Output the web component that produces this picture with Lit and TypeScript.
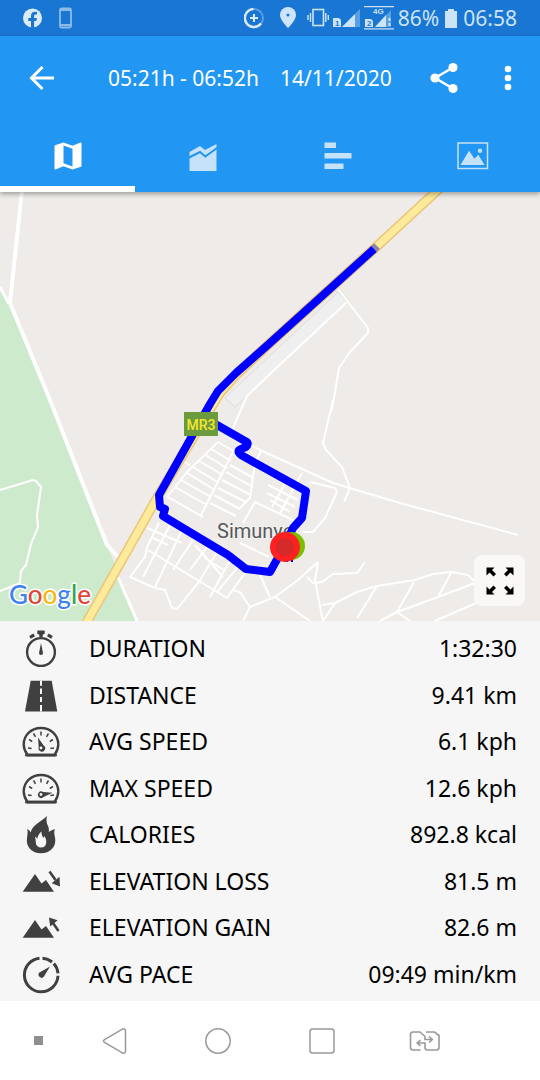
import { LitElement, html, svg, css, TemplateResult } from "lit";
import { customElement, state } from "lit/decorators.js";

const icon = (w: number, h: number, body: TemplateResult) =>
  html`<svg width=${w} height=${h} viewBox="0 0 ${w} ${h}" aria-hidden="true">${body}</svg>`;

/* ---------- stat icons, 40 x 40 ---------- */
const gauge = (needle: TemplateResult) => svg`
  <path d="M6.500 32h27c2.500-3.500 3.800-7 3.800-10.500C37.300 12 29.500 5 20 5S2.700 12 2.700 21.500c0 3.500 1.300 7 3.800 10.500z"
    fill="none" stroke="#404040" stroke-width="2.400" stroke-linejoin="round"/>
  <path d="M5.500 32.200h29" stroke="#404040" stroke-width="2.800" stroke-linecap="round"/>
  <path d="M20 8.500v4M12.500 10.500l2 3.300M27.500 10.500l-2 3.300M8 16.500l3.200 2M32 16.500l-3.200 2M7 25l3.600.6M33 25l-3.600.6"
    stroke="#404040" stroke-width="1.500"/>
  ${needle}`;

const mountains = svg`<path d="M1.700 28.700L14 11l6.500 9.500 4.500-3.500 8 11.700z" fill="#404040"/>`;

const statIcons: Record<string, TemplateResult> = {
  duration: svg`
    <circle cx="20" cy="22" r="13.900" fill="none" stroke="#404040" stroke-width="2.400"/>
    <path d="M16.300.5h7.400v3.300l-2 1v2.200h-3.400V4.800l-2-1z" fill="#404040"/>
    <path d="M9 7.300l4.200-2.500M31 7.300l-4.200-2.500" stroke="#404040" stroke-width="3.200"/>
    <path d="M20 13l2 10a2 2 0 0 1-4 0z" fill="#404040"/>`,
  distance: svg`
    <path d="M9.700 3.800H30.700L36.300 34.400H4z" fill="#404040"/>
    <path d="M20 3.800v5M20 11.500v5.500M20 20v5M20 28v6.400" stroke="#f6f6f6" stroke-width="2"/>`,
  avg: gauge(svg`<path d="M17 14.500l5.600 8a3.300 3.300 0 1 1-4.900 2z" fill="#404040"/>
    <circle cx="20" cy="25" r="1.400" fill="#f6f6f6"/>`),
  max: gauge(svg`<path d="M31.500 22.800l-9 4.300a3.300 3.300 0 1 1-.5-5.200z" fill="#404040"/>
    <circle cx="20" cy="24.500" r="1.400" fill="#f6f6f6"/>`),
  calories: svg`
    <path d="M26 0c-1 4-.5 7 .8 9.500 1 2 1.300 4 1 6.500 1.500-.8 3-2 6.200-2.700-1.500 2.500-.5 5.500.2 9.200C35.300 31 29 37.300 20 37.300S4.700 31 6 22c.4-3 1-5.500.3-9 1.700.7 2.700 2 3.300 3.500 1-4 3.500-6.500 7-9.200C20 4.800 23 3 26 0z" fill="#404040"/>
    <path d="M20.500 15.500c-.3 3 1 4.500 1.800 6.500.6-.5.8-1.200.8-2.200 2 2.700 2.400 5 2.100 7.200-.4 3-2.400 4.500-5.200 4.500s-5-1.700-5.200-4.700c-.1-2.300-.2-4.300-.8-6 1.200.4 1.900 1.200 2.300 2.200.3-3 1.800-5.500 4.200-7.500z" fill="#f6f6f6"/>`,
  loss: svg`${mountains}
    <path d="M28.500 8.500l6 8.500" stroke="#404040" stroke-width="2.600"/>
    <path d="M39 23.500l-8.300-3.300 7.800-6.400z" fill="#404040"/>`,
  gain: svg`${mountains}
    <path d="M37.500 22l-5.500-8" stroke="#404040" stroke-width="2.600"/>
    <path d="M28 8.500l8.600 2.800-7.400 6.300z" fill="#404040"/>`,
  pace: svg`
    <g fill="none" stroke="#404040" stroke-width="3">
      <path d="M18.500 2.300A16.800 16.800 0 1 0 37 19.800"/>
      <path d="M21.500 2.200A16.800 16.800 0 0 1 31 6"/>
      <path d="M32.800 7.500A16.800 16.800 0 0 1 37 17.300"/>
    </g>
    <path d="M29 10.500l-6.200 10.300a3 3 0 1 1-4.300-4.300z" fill="#404040"/>`,
};

const stats = [
  ["duration", "DURATION", "1:32:30"],
  ["distance", "DISTANCE", "9.41 km"],
  ["avg", "AVG SPEED", "6.1 kph"],
  ["max", "MAX SPEED", "12.6 kph"],
  ["calories", "CALORIES", "892.8 kcal"],
  ["loss", "ELEVATION LOSS", "81.5 m"],
  ["gain", "ELEVATION GAIN", "82.6 m"],
  ["pace", "AVG PACE", "09:49 min/km"],
];

/* ---------- tab icons, 36 x 36 ---------- */
const tabs: [string, TemplateResult][] = [
  ["Map", svg`<g transform="scale(1.5)"><path fill="currentColor" d="M20.500 3l-.16.03L15 5.100 9 3 3.360 4.900c-.21.07-.36.25-.36.48V20.500c0 .28.22.5.5.5l.16-.03L9 18.900l6 2.100 5.640-1.900c.21-.07.36-.25.36-.48V3.500c0-.28-.22-.5-.5-.5zM15 19l-6-2.110V5l6 2.110V19z"/></g>`],
  ["Charts", svg`<path fill="currentColor" d="M4.500 14L15 8l5 4 11.500-6v27h-27z"/>
    <path fill="none" stroke="#2196f3" stroke-width="2" d="M4 19.500l11-5.500 5.300 4.500L32 10"/>`],
  ["Laps", svg`<path fill="currentColor" d="M4.500 4.500H16V10H4.500zM4.500 15h27v5.500h-27zM4.500 25.500h19V31h-19z"/>`],
  ["Photos", svg`<rect x="3" y="5" width="29.500" height="25.500" fill="none" stroke="currentColor" stroke-width="1.500"/>
    <path fill="currentColor" d="M5.500 27L14 12.700l5.500 8 3.800-4L29.500 27z"/><circle cx="25" cy="12.700" r="2.200" fill="currentColor"/>`],
];

/* ---------- map geometry ---------- */
const highway = "M440 188L375 248 270 343 237 374 220 393 157 498 84 627";

const route =
  "M374 249L270 343 236 373 218 391 210 404 159 495 160 507 165 509 163 516 228 555 246 569 270 572 284 547 293 528 302 518 306 491 241 455Q236 451 241 449L246 447Q250 443 245 441L210 421";

const streets = [
  "M338 289L368 328V333L350 352 339 368 332 410 333 400 323 443 326 450 342 467 350 488 344 502",
  "M347 302L270 374 247 396 232 430",
  "M248 444L260 450 333 483 400 503 518 535",
  "M310 482L335 488 337 492 325 518 313 532 302 532",
  "M318 562L298 580 275 597 250 607 240 592 233 590M250 607L243 621M275 597L310 621M260 575L270 597",
  "M318 562L315 580 323 622M307 577L313 583 322 582 333 574 357 573 365 562",
  "M322 605L335 603 357 592 377 586 415 580 433 574 452 572 468 575 475 582M335 603L323 621M377 586L357 618",
  "M380 621L397 612 438 597 475 583M414 582L397 612 410 621M451 573L438 597M435 621L483 600",
];

const lanes = [
  "M218 442L187 472 167 497M233 452L200 517M255 463L250 498 240 508",
  "M218 442L235 452M211 449L231 461M205 455L227 468M199 461L223 475M193 467L219 483M187 473L215 490M181 480L211 497M175 487L207 505M168 497L203 517",
  "M235 455L255 466M230 465L254 478M226 472L253 487M222 480L251 495M218 488L246 502M214 495L240 509M210 503L236 516",
  "M185 462L190 466M243 523L255 502 293 520M261 451L255 463M302 473L280 513M287 480L272 507M268 485L298 500M267 493L295 507M270 500L290 512",
  "M159 523L147 547 145 557 130 577 155 588 165 590 172 608 177 609 202 578",
  "M148 550L227 598 247 570M182 530L155 587M170 525L143 577M193 540L173 570M207 547L190 570M217 552L200 580M230 560L210 597M238 567L217 592",
  "M147 528L182 543M153 538L168 545M195 545L223 577M205 558L225 571M240 543L269 557",
];

@customElement("activity-map")
class ActivityMap extends LitElement {
  static styles = css`
    :host { display: block; position: relative; overflow: hidden; background: #eeebe8; }
    .canvas { position: absolute; inset: 0; width: 100%; height: 100%; display: block; }
    .place { font: 20px Roboto, "Noto Sans", sans-serif; fill: #54595c; stroke: #f4f2f0; stroke-width: 2px; paint-order: stroke; }
    .shield { font: 500 14px Roboto, "Noto Sans", sans-serif; fill: #f6e72e; text-anchor: middle; }
    .brand { font: 500 26px Lato, sans-serif; stroke: #fff; stroke-width: 3px; paint-order: stroke; stroke-linejoin: round; }
    .b { fill: #4081ec; } .r { fill: #e2453a; } .y { fill: #f5b912; } .g { fill: #34a350; }
    .full {
      position: absolute; right: 15px; bottom: 15px; width: 51px; height: 51px; padding: 0;
      border: 0; border-radius: 8px; background: #f9f8f7; display: grid; place-items: center; cursor: pointer;
    }
  `;

  render() {
    return html`
      <svg class="canvas" viewBox="0 192 540 429" preserveAspectRatio="xMidYMid slice" role="img" aria-label="Route near Simunye">
        <path d="M0 288L9 305 50 400 107 545 137 621H0z" fill="#cdeacd"/>
        <g fill="none" stroke="#fff" stroke-linejoin="round">
          <path d="M0 490L33 480 36 481 41 487 37 515 38 527 31 544 26 565 21 571 20 583 0 591" stroke-width="2"/>
          <path d="M0 287L9 304" stroke-width="3"/>
          <path d="M22 190L10 303 50 400 107 545 118 557" stroke-width="4"/>
          <path d="M118 577L137 621" stroke-width="3"/>
        </g>
        <path d="M338 292L347 302 235 407 225 398z" fill="#f0efef" stroke="#dedcdb"/>
        <g fill="none" stroke="#fff" stroke-linejoin="round" stroke-width="2">${streets.map((d) => svg`<path d=${d}/>`)}</g>
        <g fill="none" stroke="#fff" stroke-linejoin="round" stroke-width="2">${lanes.map((d) => svg`<path d=${d}/>`)}</g>
        <g fill="none" stroke-linejoin="round">
          <path d=${highway} stroke="#ecc676" stroke-width="10"/>
          <path d=${highway} stroke="#fdea9b" stroke-width="7"/>
        </g>
        <path d="M372 251L377 246" stroke="#8d84a8" stroke-width="8"/>
        <text class="place" x="217" y="538">Simunye</text>
        <path d=${route} fill="none" stroke="#0000fe" stroke-width="8" stroke-linejoin="round"/>
        <rect x="184" y="412" width="34" height="24" fill="#6b9a3f"/>
        <text class="shield" x="201" y="430">MR3</text>
        <path d="M287 560v2M292 558v4" stroke="#0000c0" stroke-width="2"/>
        <circle cx="291" cy="546" r="14" fill="#77c000"/>
        <circle cx="285" cy="547" r="15" fill="#ff2020"/>
        <circle cx="285" cy="547" r="9" fill="#d42a2a"/>
        <text class="brand" x="9" y="604"><tspan class="b">G</tspan><tspan class="r">o</tspan><tspan class="y">o</tspan><tspan class="b">g</tspan><tspan class="g">l</tspan><tspan class="r">e</tspan></text>
      </svg>
      <button class="full" aria-label="Full screen">
        ${icon(28, 28, svg`
          <path d="M.5.5h8l-2.500 2.500 4 4-2.500 2.500-4-4-3 3zM27.500.5h-8l2.500 2.500-4 4 2.500 2.500 4-4 3 3zM.5 27.500h8l-2.500-2.500 4-4-2.500-2.500-4 4-3-3zM27.500 27.500h-8l2.500-2.500-4-4 2.500-2.500 4 4 3-3z"/>`)}
      </button>`;
  }
}

@customElement("app-root")
class AppRoot extends LitElement {
  @state() tab = 0;

  static styles = css`
    :host {
      display: flex; flex-direction: column; min-height: 100vh; background: #fff; color: #000;
      font-family: "Noto Sans", "Open Sans", sans-serif;
    }
    svg { display: block; flex: none; }
    button { border: 0; padding: 0; margin: 0; background: none; color: inherit; display: grid; place-items: center; cursor: pointer; }
    .status {
      height: 36px; background: #1976d2; color: #cde3f8; display: flex; align-items: center;
      padding: 0 23px; font-size: 21px; line-height: 36px; white-space: nowrap;
    }
    .left { display: flex; gap: 17px; flex: 1; }
    .sys { display: flex; gap: 16px; margin-right: 11px; }
    .signal { display: flex; align-items: center; gap: 4px; }
    .tiny { font: bold 8px "Liberation Sans", sans-serif; }
    .top { position: relative; background: #2196f3; color: #fff; box-shadow: 0 2px 5px rgba(0, 0, 0, 0.35); z-index: 1; }
    .bar { display: flex; height: 84px; }
    .back { width: 84px; }
    .title {
      flex: 1; margin: 0; padding-left: 24px; display: flex; gap: 21px; align-items: center;
      font-size: 21px; font-weight: 400; white-space: nowrap;
    }
    .act { width: 64px; }
    .tabs { display: flex; height: 72px; }
    .tab { flex: 1; color: #c6e2f9; border-top: 6px solid transparent; border-bottom: 6px solid transparent; }
    .tab.on { color: #fff; border-bottom-color: #fff; }
    activity-map { flex: 1; min-height: 300px; }
    .stats { margin: 0; padding: 6px 23px 2px 21px; min-height: 372px; background: #f6f6f6; display: grid; grid-auto-rows: 1fr; font-size: 23px; line-height: 32px; }
    .row { display: flex; align-items: center; }
    .row dt { flex: 1; padding: 0 0 4px 28px; }
    .row dd { margin: 0; padding-bottom: 4px; }
    .nav { height: 79px; display: flex; padding: 0 63px 0 13px; color: #999; }
    .nav button { flex: 1; }
    .nav .dot { flex: 0 0 50px; }
  `;

  render() {
    return html`
      <div class="status">
        <div class="left">
          ${icon(19, 22, svg`<circle cx="9.500" cy="11" r="9.500" fill="#dcebfa"/>
            <path d="M8 21v-7H5.300v-3H8V9c0-2.800 1.500-4.200 4-4.200.8 0 1.500.1 2 .2v2.600h-1.300c-1.200 0-1.600.7-1.600 1.600V11h2.800l-.5 3h-2.300v7z" fill="#1976d2"/>`)}
          ${icon(13, 22, svg`<rect x="1" y="1.500" width="11" height="19" rx="1.500" fill="none" stroke="#8cbbe9" stroke-width="1.800"/>
            <path d="M1 3h11M1 18h11" stroke="#8cbbe9" stroke-width="1.800"/>`)}
        </div>
        <div class="sys">
          ${icon(20, 22, svg`<circle cx="10" cy="11" r="9" fill="none" stroke="#5b9fe0" stroke-width="2"/>
            <path d="M9.500 2A9 9 0 1 0 17 16.500" fill="none" stroke="#dcebfa" stroke-width="2.400"/>
            <path d="M10 7v8M6 11h8" stroke="#dcebfa" stroke-width="2"/>`)}
          ${icon(16, 22, svg`<path d="M8 0a8 8 0 0 0-8 8c0 5.500 8 13 8 13s8-7.500 8-13a8 8 0 0 0-8-8z" fill="#cde3f8"/><circle cx="8" cy="8" r="1.500" fill="#1976d2"/>`)}
        </div>
        <div class="signal">
          ${icon(22, 22, svg`<rect x="6" y="2.500" width="10.500" height="16" fill="none" stroke="#cde3f8" stroke-width="1.600"/>
            <path d="M3.500 6v9M1 8v5M18.800 6v9M21.300 8v5" stroke="#cde3f8" stroke-width="1.400"/>`)}
          ${icon(27, 24, svg`<path d="M27 3v18H9z" fill="#5b9fe0"/><path d="M22 8v13H9z" fill="#cde3f8"/>
            <path d="M0 12h6l2 2v7H0z" fill="#cde3f8"/><text class="tiny" x="2" y="20" fill="#1976d2">1</text>`)}
          ${icon(30, 24, svg`<path d="M0 .7h30M0 22.800h30" stroke="#cde3f8" stroke-width="1.200"/>
            <text class="tiny" x="9" y="8" fill="#cde3f8">4G</text>
            <path d="M27 4v17H11z" fill="#5b9fe0"/><path d="M22 9v12H11z" fill="#cde3f8"/>
            <path d="M25.500 12v3M25.500 17v3" stroke="#cde3f8" stroke-width="2"/>
            <path d="M1 13h6l2 2v6H1z" fill="#cde3f8"/><text class="tiny" x="3" y="20" fill="#1976d2">2</text>`)}
          <span>86%</span>
          ${icon(16, 22, svg`<path d="M2 4h3V2h6v2h3v17H2z" fill="#cde3f8"/>`)}
          <span>06:58</span>
        </div>
      </div>

      <header class="top">
        <div class="bar">
          <button class="back" aria-label="Back">
            ${icon(26, 26, svg`<path d="M25 13H3M13.500 2L2.500 13l11 11" fill="none" stroke="currentColor" stroke-width="3"/>`)}
          </button>
          <h1 class="title"><span>05:21h - 06:52h</span><span>14/11/2020</span></h1>
          <button class="act" aria-label="Share">
            ${icon(28, 32, svg`<path d="M23 5.500L5 16l18 10.500" fill="none" stroke="currentColor" stroke-width="2.500"/>
              <circle cx="23" cy="5.500" r="4.600" fill="currentColor"/><circle cx="5" cy="16" r="4.600" fill="currentColor"/><circle cx="23" cy="26.500" r="4.600" fill="currentColor"/>`)}
          </button>
          <button class="act" aria-label="More options">
            ${icon(8, 26, svg`<circle cx="4" cy="4" r="3.300" fill="currentColor"/><circle cx="4" cy="13" r="3.300" fill="currentColor"/><circle cx="4" cy="22" r="3.300" fill="currentColor"/>`)}
          </button>
        </div>
        <nav class="tabs">
          ${tabs.map(([name, glyph], i) => html`
            <button class="tab ${i === this.tab ? "on" : ""}" aria-label=${name} @click=${() => (this.tab = i)}>${icon(36, 36, glyph)}</button>`)}
        </nav>
      </header>

      <activity-map></activity-map>

      <dl class="stats">
        ${stats.map(([key, label, value]) => html`
          <div class="row">${icon(40, 40, statIcons[key])}<dt>${label}</dt><dd>${value}</dd></div>`)}
      </dl>

      <nav class="nav">
        <button class="dot" aria-label="Hide bar">${icon(9, 9, svg`<path d="M0 0h9v9H0z" fill="#8f8f8f"/>`)}</button>
        <button aria-label="Back">
          ${icon(26, 28, svg`<path d="M2.500 12.600L20 2.300q3.500-1.500 3.500 2v19.400q0 3.500-3.500 2L2.500 15.400q-2-1.400 0-2.800z" fill="none" stroke="currentColor" stroke-width="1.500"/>`)}
        </button>
        <button aria-label="Home">${icon(28, 28, svg`<circle cx="14" cy="14" r="12.200" fill="none" stroke="currentColor" stroke-width="1.500"/>`)}</button>
        <button aria-label="Recent apps">${icon(28, 28, svg`<rect x="2" y="2" width="24" height="24" rx="2.500" fill="none" stroke="currentColor" stroke-width="1.500"/>`)}</button>
        <button aria-label="Switch SIM">
          ${icon(32, 22, svg`<g fill="none" stroke="currentColor" stroke-width="1.600">
            <path d="M11.500 20H4q-2.500 0-2.500-2.500v-13Q1.500 2 4 2h7l5 4.500v3h7M20 6.500l3.300 3-3.300 3"/>
            <path d="M17 2h8.500L30 5.500v12q0 2.500-2.500 2.500h-9q-2.500 0-2.500-2.500v-4.500H8.500M11.500 10l-3.300 3 3.300 3"/></g>`)}
        </button>
      </nav>`;
  }
}
